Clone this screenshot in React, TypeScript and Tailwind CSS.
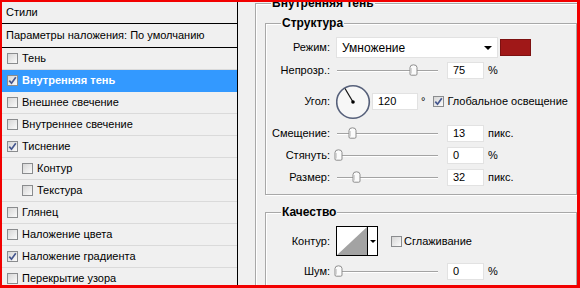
import React from 'react';

type Item = { label: string; checked?: boolean; active?: boolean; sub?: boolean };

const items: Item[] = [
  { label: 'Тень' },
  { label: 'Внутренняя тень', checked: true, active: true },
  { label: 'Внешнее свечение' },
  { label: 'Внутреннее свечение' },
  { label: 'Тиснение', checked: true },
  { label: 'Контур', sub: true },
  { label: 'Текстура', sub: true },
  { label: 'Глянец' },
  { label: 'Наложение цвета' },
  { label: 'Наложение градиента', checked: true },
  { label: 'Перекрытие узора' },
];

function Checkbox({ checked }: { checked?: boolean }) {
  return (
    <span className="flex h-[11px] w-[11px] shrink-0 items-center justify-center border border-[#8a8c8e] bg-gradient-to-br from-[#d6d6d6] to-[#fbfbfb]">
      {checked && (
        <svg width="9" height="9" viewBox="0 0 9 9">
          <path d="M1.3 4.6 L3.5 7.2 L7.8 1.2" fill="none" stroke="#45578f" strokeWidth="1.7" />
        </svg>
      )}
    </span>
  );
}

// handle x is the pixel where the knob centre sits; track begins at x=336
function Slider({ at }: { at: number }) {
  return (
    <div className="relative h-[17px] w-[105px] shrink-0">
      <div className="absolute left-[1px] right-[3px] top-[8px] h-[1px] bg-[#a3a3a3] shadow-[0_1px_0_#ffffff]" />
      <svg className="absolute top-[2px]" style={{ left: at - 336 - 4 }} width="9" height="12" viewBox="0 0 9 12">
        <path d="M1 3.5 Q1 0.8 4.5 0.8 Q8 0.8 8 3.5 L8 10 Q8 11.2 6.8 11.2 L2.2 11.2 Q1 11.2 1 10 Z" fill="#fbfbfb" stroke="#8d8d8d" strokeWidth="1" />
        <path d="M2.5 4 L2.5 9.5" stroke="#d6d6d6" strokeWidth="1" />
      </svg>
    </div>
  );
}

function NumBox({ value, w = 'w-[37px]' }: { value: string; w?: string }) {
  return (
    <div className={`flex h-[17px] ${w} shrink-0 items-center border border-[#e2e2e2] bg-white pl-[5px] text-[11px] leading-none`}>
      {value}
    </div>
  );
}

function Label({ children }: { children: React.ReactNode }) {
  return <div className="mr-[6px] w-[64px] shrink-0 text-right text-[11px] leading-none">{children}</div>;
}

function SliderRow({ label, at, value, unit, mt }: { label: string; at: number; value: string; unit: string; mt: string }) {
  return (
    <div className={`flex h-[17px] items-center ${mt}`}>
      <Label>{label}</Label>
      <Slider at={at} />
      <div className="ml-[6px]">
        <NumBox value={value} />
      </div>
      <span className="ml-[4px] text-[11px] leading-none">{unit}</span>
    </div>
  );
}

export default function App() {
  return (
    <div className="h-[288px] w-[580px] overflow-hidden whitespace-nowrap border-b-[3px] border-l-2 border-r-[3px] border-t-2 border-[#f20000] font-['Liberation_Sans',Arial,sans-serif] text-black">
      <div className="flex h-full">
        {/* styles list */}
        <div className="w-[236px] shrink-0 border-r border-black bg-[#f0f0f0]">
          <div className="flex h-[22px] items-center border-b border-black pl-[4px] text-[11px]">Стили</div>
          <div className="flex h-[24px] items-center border-b border-black pl-[4px] text-[11px]">Параметры наложения: По умолчанию</div>
          {items.map((it) => (
            <div
              key={it.label}
              className={`flex h-[22px] items-center gap-[4px] border-b text-[11px] ${it.sub ? 'pl-[20px]' : 'pl-[5px]'} ${
                it.active ? 'border-[#3399ff] bg-[#3399ff] font-bold text-white' : 'border-[#dadada]'
              }`}
            >
              <Checkbox checked={it.checked} />
              <span>{it.label}</span>
            </div>
          ))}
        </div>

        {/* settings */}
        <div className="min-w-0 flex-1 bg-[#f0f0f0] pl-[17px] pt-[1px]">
          <div className="relative h-[300px] border-l border-t border-[#a8a8a8] pl-[9px] pt-[19px] shadow-[inset_1px_1px_0_#ffffff]">
            <span className="absolute left-[15px] top-[-8px] bg-[#f0f0f0] px-[1px] text-[12px] font-bold leading-[14px]">Внутренняя тень</span>

            {/* structure */}
            <div className="relative h-[172px] border border-[#a8a8a8] pt-[13px] shadow-[inset_1px_1px_0_#ffffff,1px_1px_0_#ffffff]">
              <span className="absolute left-[15px] top-[-8px] bg-[#f0f0f0] px-[1px] text-[12px] font-bold leading-[14px]">Структура</span>

              <div className="flex h-[21px] items-center">
                <Label>Режим:</Label>
                <div className="flex h-[21px] w-[162px] shrink-0 items-center justify-between border border-[#e2e2e2] bg-white pl-[5px] pr-[5px] text-[12px] leading-none">
                  <span>Умножение</span>
                  <svg width="8" height="4" viewBox="0 0 8 4">
                    <path d="M0 0 L8 0 L4 4 Z" fill="#000" />
                  </svg>
                </div>
                <div className="ml-[2px] h-[17px] w-[31px] shrink-0 border border-[#7d1111] bg-[#a01818]" />
              </div>

              <SliderRow label="Непрозр.:" at={413} value="75" unit="%" mt="mt-[4px]" />

              <div className="mt-[5px] flex h-[35px] items-center">
                <Label>Угол:</Label>
                <svg width="36" height="36" viewBox="0 0 36 36" className="shrink-0">
                  <circle cx="17" cy="18" r="16.3" fill="#f7f7f7" stroke="#56607a" strokeWidth="1.6" />
                  <line x1="17" y1="18" x2="9" y2="4.5" stroke="#111" strokeWidth="1.2" />
                  <circle cx="17" cy="18" r="1.8" fill="#000" />
                </svg>
                <NumBox value="120" w="w-[46px]" />
                <span className="ml-[3px] text-[11px] leading-none">°</span>
                <div className="ml-[8px] shrink-0">
                  <Checkbox checked />
                </div>
                <span className="ml-[3px] text-[11px] leading-none">Глобальное освещение</span>
              </div>

              <SliderRow label="Смещение:" at={352} value="13" unit="пикс." mt="mt-[6px]" />
              <SliderRow label="Стянуть:" at={338} value="0" unit="%" mt="mt-[5px]" />
              <SliderRow label="Размер:" at={356} value="32" unit="пикс." mt="mt-[5px]" />
            </div>

            {/* quality */}
            <div className="relative mt-[17px] h-[100px] border border-[#a8a8a8] pt-[13px] shadow-[inset_1px_1px_0_#ffffff,1px_1px_0_#ffffff]">
              <span className="absolute left-[15px] top-[-8px] bg-[#f0f0f0] px-[1px] text-[12px] font-bold leading-[14px]">Качество</span>

              <div className="flex h-[30px] items-center">
                <Label>Контур:</Label>
                <svg width="42" height="30" viewBox="0 0 42 30" className="shrink-0">
                  <rect x="0.5" y="0.5" width="41" height="29" fill="#fff" stroke="#000" />
                  <path d="M1 29 L31 1 L31 29 Z" fill="#a3a3a3" />
                  <line x1="31.5" y1="0.5" x2="31.5" y2="29.5" stroke="#000" />
                  <path d="M34 14 L40 14 L37 17 Z" fill="#000" />
                </svg>
                <div className="ml-[13px] shrink-0">
                  <Checkbox />
                </div>
                <span className="ml-[2px] text-[11px] leading-none">Сглаживание</span>
              </div>

              <SliderRow label="Шум:" at={338} value="0" unit="%" mt="mt-[7px]" />
            </div>
          </div>
        </div>
      </div>
    </div>
  );
}
